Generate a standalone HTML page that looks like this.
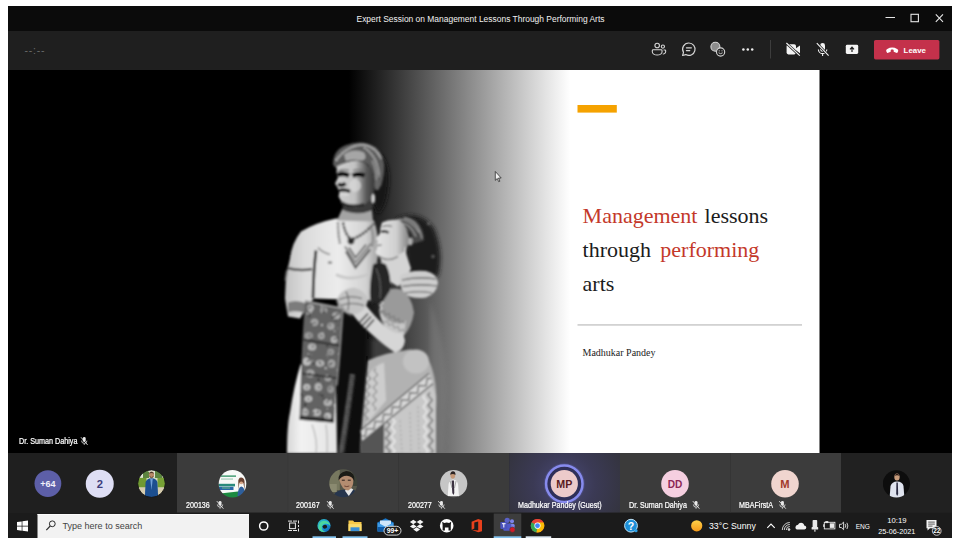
<!DOCTYPE html>
<html>
<head>
<meta charset="utf-8">
<title>Expert Session on Management Lessons Through Performing Arts</title>
<style>
*{box-sizing:border-box;margin:0;padding:0}
html,body{width:960px;height:550px;background:#fff;overflow:hidden}
body{position:relative;font-family:"Liberation Sans",sans-serif;color:#fff}
#win{position:absolute;left:8px;top:6px;width:944px;height:531.5px;background:#000;overflow:hidden}
.abs{position:absolute}
#titlebar{position:absolute;left:0;top:0;width:944px;height:25px;background:#0b0b0b}
#title{position:absolute;left:0;width:944px;top:7px;text-align:center;font-size:8.45px;line-height:12px;color:#f2f2f2;padding-left:1px}
#toolbar{position:absolute;left:0;top:25px;width:944px;height:38.5px;background:#1f1f1f}
#stage{position:absolute;left:0;top:63.5px;width:944px;height:383.5px;background:#000}
#strip{position:absolute;left:0;top:447px;width:944px;height:59.5px;background:#1f1f1f}
#taskbar{position:absolute;left:0;top:506.5px;width:944px;height:25px;background:#1b1b1b}
.tile{position:absolute;top:0;height:59.5px;background:#3b3b3b}
.av{position:absolute;border-radius:50%;overflow:hidden}
.lbl{position:absolute;font-size:8.3px;line-height:10px;color:#fff;white-space:nowrap;font-weight:400;-webkit-text-stroke:.22px #fff;transform:scaleX(.86);transform-origin:0 0}
</style>
</head>
<body>
<div id="win">
  <div id="titlebar">
    <div id="title">Expert Session on Management Lessons Through Performing Arts</div>
    <svg class="abs" style="left:870px;top:0" width="74" height="25" viewBox="0 0 74 25">
      <path d="M7.5 11.5H17" stroke="#e6e6e6" stroke-width="1" fill="none"/>
      <rect x="33" y="8.3" width="7.4" height="7.4" stroke="#e6e6e6" stroke-width="1.1" fill="none"/>
      <path d="M57.8 8.3L65 15.8M65 8.3L57.8 15.8" stroke="#e6e6e6" stroke-width="1.1" fill="none"/>
    </svg>
  </div>
  <div id="toolbar">
    <div class="abs" style="left:16.6px;top:13.9px;font-size:10.5px;line-height:11px;color:#6a6a6a;letter-spacing:.75px">--:--</div>
    <svg class="abs" style="left:0;top:0" width="944" height="38.5" viewBox="8 31 944 38.5">
      <!-- people -->
      <g stroke="#d6d6d6" stroke-width="1.3" fill="none" stroke-linejoin="round" transform="translate(659.2 48.8) scale(.84) translate(-659.6 -49.2)">
        <circle cx="657.2" cy="45.3" r="2.7"/>
        <path d="M652.4 50.4 h9.6 a1 1 0 0 1 1 1 v1.2 a5.8 4 0 0 1 -11.6 0 v-1.2 a1 1 0 0 1 1 -1z"/>
        <circle cx="664" cy="46.6" r="1.9"/>
        <path d="M664.8 50.6 h1.6 a.9 .9 0 0 1 .9 .9 v.9 a3.2 3 0 0 1 -3.4 3"/>
      </g>
      <!-- chat -->
      <g stroke="#d6d6d6" stroke-width="1.15" fill="none" stroke-linecap="round" stroke-linejoin="round">
        <path d="M688.8 43 a6.2 6.2 0 1 1 -3 11.6 l-3.2 .9 .9 -3.1 a6.2 6.2 0 0 1 5.3 -9.4z"/>
        <path d="M686.4 47.8 h5 M686.4 50.6 h3.4"/>
      </g>
      <!-- reactions -->
      <g>
        <circle cx="715.4" cy="46.8" r="4.5" fill="#8d8d8d" stroke="#d6d6d6" stroke-width="1.1"/>
        <circle cx="720.6" cy="52" r="4.1" fill="#1f1f1f" stroke="#d6d6d6" stroke-width="1.1"/>
        <path d="M718.6 52.8 q2 1.8 4 0" stroke="#d6d6d6" stroke-width=".9" fill="none"/>
        <circle cx="719.2" cy="50.8" r=".6" fill="#d6d6d6"/><circle cx="722" cy="50.8" r=".6" fill="#d6d6d6"/>
      </g>
      <!-- more -->
      <circle cx="743.4" cy="49.5" r="1.25" fill="#ededed"/><circle cx="747.8" cy="49.5" r="1.25" fill="#ededed"/><circle cx="752.2" cy="49.5" r="1.25" fill="#ededed"/>
      <rect x="770" y="40" width="1" height="18.5" fill="#3d3d3d"/>
      <!-- camera off -->
      <g>
        <rect x="786.6" y="44.2" width="9.4" height="10.2" rx="1.8" fill="#f4f4f4"/>
        <path d="M796 48.2 L800 45.4 V53.2 L796 50.4 Z" fill="#f4f4f4"/>
        <path d="M785.8 42.6 L800.2 56" stroke="#1f1f1f" stroke-width="2.6"/>
        <path d="M786.4 43 L799.8 55.6" stroke="#f4f4f4" stroke-width="1.1"/>
      </g>
      <!-- mic off -->
      <g>
        <rect x="820.2" y="43" width="4.8" height="8.8" rx="2.4" fill="#f4f4f4"/>
        <path d="M818.4 49.4 a4.2 4.2 0 0 0 8.4 0 M822.6 53.6 v2.4" stroke="#f4f4f4" stroke-width="1.1" fill="none"/>
        <path d="M816.4 42.8 L829 56" stroke="#1f1f1f" stroke-width="2.6"/>
        <path d="M816.8 43.2 L828.6 55.6" stroke="#f4f4f4" stroke-width="1.1"/>
      </g>
      <!-- share -->
      <g>
        <rect x="845.8" y="44.8" width="12.4" height="9.2" rx="1.4" fill="#f4f4f4"/>
        <path d="M852 52 V47.6 M850 49.4 L852 47.2 L854 49.4" stroke="#1f1f1f" stroke-width="1.2" fill="none"/>
      </g>
      <!-- leave -->
      <rect x="874" y="40" width="65.4" height="19.4" rx="1.6" fill="#c4314b"/>
      <path d="M886.4 51.6 c-.5 -1 -.2 -2 .9 -2.7 c3.1 -1.9 6.7 -1.9 9.8 0 c1.1 .7 1.4 1.7 .9 2.7 l-.5 .8 c-.3 .5 -.8 .6 -1.3 .4 l-1.9 -.8 c-.5 -.2 -.7 -.6 -.7 -1.1 l.1 -1 c-1.100 -.4 -1.900 -.4 -3 0 l.1 1 c0 .5 -.2 .9 -.7 1.100 l-1.900 .8 c-.5 .2 -1 .1 -1.300 -.4z" fill="#fff"/>
      <text x="903.6" y="52.5" font-family="Liberation Sans, sans-serif" font-weight="700" font-size="7.9" fill="#fff">Leave</text>
    </svg>
  </div>
  <div id="stage">
    <svg class="abs" style="left:0;top:0" width="944" height="383.5" viewBox="8 69.5 944 383.5">
      <defs>
        <linearGradient id="bgG" gradientUnits="userSpaceOnUse" x1="349" y1="0" x2="570" y2="0">
          <stop offset="0" stop-color="#000"/><stop offset="1" stop-color="#fff"/>
        </linearGradient>
        <filter id="b1" x="-10%" y="-10%" width="120%" height="120%"><feGaussianBlur stdDeviation=".9"/></filter>
        <filter id="b2" x="-20%" y="-20%" width="140%" height="140%"><feGaussianBlur stdDeviation="2.2"/></filter>
      </defs>
      <rect x="8" y="69.5" width="811.5" height="383.5" fill="url(#bgG)"/>
      <g id="photo">
        <defs>
          <linearGradient id="faceG" gradientUnits="userSpaceOnUse" x1="336" y1="0" x2="378" y2="0">
            <stop offset="0" stop-color="#cfcfcf"/><stop offset=".45" stop-color="#c2c2c2"/><stop offset=".72" stop-color="#5a5a5a"/><stop offset="1" stop-color="#2c2c2c"/>
          </linearGradient>
          <linearGradient id="torsoG" gradientUnits="userSpaceOnUse" x1="286" y1="0" x2="380" y2="0">
            <stop offset="0" stop-color="#c4c4c4"/><stop offset=".2" stop-color="#dcdcdc"/><stop offset=".55" stop-color="#ececec"/><stop offset=".85" stop-color="#d2d2d2"/><stop offset="1" stop-color="#9a9a9a"/>
          </linearGradient>
          <linearGradient id="wfaceG" gradientUnits="userSpaceOnUse" x1="376" y1="0" x2="410" y2="0">
            <stop offset="0" stop-color="#e6e6e6"/><stop offset=".6" stop-color="#cfcfcf"/><stop offset="1" stop-color="#7c7c7c"/>
          </linearGradient>
          <linearGradient id="dhotiG" gradientUnits="userSpaceOnUse" x1="284" y1="0" x2="340" y2="0">
            <stop offset="0" stop-color="#d0d0d0"/><stop offset=".3" stop-color="#f2f2f2"/><stop offset="1" stop-color="#e2e2e2"/>
          </linearGradient>
        </defs>
        <!-- soft dark shapes -->
        <g filter="url(#b2)">
          <path d="M396 218 Q420 208 434 228 Q444 252 438 276 L404 276 Q412 250 396 218 Z" fill="#1c1c1c"/>
          <path d="M376 150 Q392 160 388 190 Q386 206 378 214 L370 196 Z" fill="#151515"/>
          <path d="M342 306 L368 316 L366 372 L360 453 L334 453 L336 420 Z" fill="#0c0c0c"/>
          
          <path d="M430 300 Q448 350 446 400 L444 453 L430 453 Z" fill="#8c8c8c" opacity=".3"/>
          <path d="M372 338 L404 342 L404 360 L372 364 Z" fill="#3c3c3c"/>
        </g>
        <g filter="url(#b1)">
          <!-- white dhoti -->
          <path d="M300.5 364 L336 370 L337 453 L287 453 Q287 425 290 412 Q294 385 300.5 364 Z" fill="url(#dhotiG)"/>
          <path d="M312 424 Q318 440 316 453 M326 424 Q328 440 327 453" stroke="#bdbdbd" stroke-width="1.4" fill="none"/>
          <!-- man body -->
          <path d="M336 218 Q316 222 301 231 Q292 242 290 258 L286 276 L285 298 L288 316 L300 318 L308 304 L314 298 L376 300 L377 262 Q381 240 374 220 Z" fill="url(#torsoG)"/>
          <!-- arm/torso gap -->
          <path d="M316 250 Q313.500 270 313 298" stroke="#2e2e2e" stroke-width="2.800" fill="none"/>
          <path d="M318 247 Q322 252 330 254" stroke="#8e8e8e" stroke-width="1.6" fill="none"/>
          <!-- armband -->
          <path d="M287 267.5 Q300 271 312 268.5" stroke="#4e4e4e" stroke-width="2.6" fill="none"/>
          <path d="M287 270 L285.5 280" stroke="#777" stroke-width="2" fill="none"/>
          <!-- wrist bracelet -->
          <path d="M288 302 Q298 298 308 304 L306 313 Q296 309 288 312 Z" fill="#7c7c7c"/>
          <!-- nipple -->
          <ellipse cx="330" cy="262" rx="2.2" ry="1.6" fill="#8a8a8a"/>
          <!-- chest shading -->
          <path d="M336 274 Q352 282 372 272" stroke="#c8c8c8" stroke-width="3" fill="none"/>
          <!-- neck -->
          <path d="M344 199 L342 210 Q356 216 372 211 L375 194 Z" fill="#3a3a3a"/>
          <path d="M342 209 Q356 216 372 210 L373 221 L337 220 Z" fill="#a4a4a4"/>
          <!-- necklaces -->
          <path d="M338 222 Q338 234 340 243" stroke="#7a7a7a" stroke-width="2.6" fill="none" stroke-dasharray="2.2 1"/>
          <path d="M343 222 Q345 234 351 239 Q362 236 374 223" stroke="#444" stroke-width="2.6" fill="none" stroke-dasharray="2.6 .9"/>
          <circle cx="351" cy="240.5" r="3.4" fill="#2e2e2e"/>
          <path d="M345 246 L355.5 262 L371 243" stroke="#8a8a8a" stroke-width="2.2" fill="none"/>
          <path d="M346 251 L355.5 267 L370 249" stroke="#5c5c5c" stroke-width="2.2" fill="none"/>
          <path d="M349 247 L355.5 257 L366 244" stroke="#6a6a6a" stroke-width="1.8" fill="none"/>
          <path d="M371 226 Q374 236 372 246" stroke="#777" stroke-width="2.2" fill="none" stroke-dasharray="2 1"/>
          <!-- turban -->
          <path d="M333 164 Q333 150 345 145 Q362 138 376 147 Q386 156 384 172 Q383 180 381 186 L374 186 Q376 172 368 164 Q356 158 346 161 Q339 163 336 168 Z" fill="#5c5c5c"/>
          <path d="M344 154 Q354 147 364 152 Q368 158 362 160 Q352 158 346 161 Z" fill="#a6a6a6"/>
          <path d="M336 160 Q346 146 362 144 Q376 146 381 158" stroke="#c8c8c8" stroke-width="2.2" fill="none" stroke-dasharray="1.8 1.1"/>
          <path d="M364 147 Q378 156 379 176" stroke="#bcbcbc" stroke-width="2" fill="none" stroke-dasharray="1.8 1.2"/>
          <path d="M372 160 Q378 170 376 184" stroke="#8c8c8c" stroke-width="2" fill="none"/>
          <!-- face -->
          <path d="M337 166 Q345 160.500 357 160 Q368 162 373 171 Q376.500 183 373.500 194 Q369 203 359 206.500 Q348 208 342 202 L338.500 196 L339.500 191.500 L337.500 187 L335 183 L338 177 L336.500 172 Z" fill="url(#faceG)"/>
          <path d="M337.500 174.600 Q343 172 349 175.200 M352.500 175.200 Q358 172.400 364.500 175.200" stroke="#050505" stroke-width="4.600" fill="none"/>
          <path d="M338 170.500 Q344 168 349 170 M353 170 Q359 168 365 171" stroke="#6a6a6a" stroke-width="1.200" fill="none"/>
          <path d="M338 183.600 q3.500 2.400 7.500 -.8" stroke="#050505" stroke-width="3.600" fill="none"/>
          <path d="M338.500 190.200 Q343.500 188.300 350 191" stroke="#0a0a0a" stroke-width="3.200" fill="none"/>
          <path d="M340 193.500 Q345 195 349 193.500" stroke="#e0e0e0" stroke-width="1.400" fill="none"/>
          <ellipse cx="355" cy="185" rx="6" ry="6.500" fill="#dadada" opacity=".7"/>
          <path d="M341.500 202 Q350 208 364 204" stroke="#2a2a2a" stroke-width="3" fill="none"/>
          <ellipse cx="377.200" cy="184.500" rx="2.600" ry="5.200" fill="#666"/>
          <ellipse cx="373.300" cy="198" rx="1.800" ry="4.600" fill="#d2d2d2"/>
          <!-- woman headband -->
          <path d="M395 219 Q406 214 416 220 Q424 228 424 240 L414 243 Q412 230 402 226 Z" fill="#4a4a4a"/>
          <path d="M397 219.500 Q410 217 419 232 M400 223 Q410 222 416 236 M404 217 Q418 220 422 238" stroke="#9a9a9a" stroke-width="1.300" fill="none"/>
          <circle cx="428.600" cy="223" r="1.600" fill="#6a6a6a"/><circle cx="433" cy="256" r="1.800" fill="#5a5a5a"/>
          <!-- woman face (tilted up) -->
          <path d="M382 222 Q390 218 400 220 Q409 228 410 242 Q404 254 392 258 Q384 259 378 255 L375.500 252 L377.500 247 L376.500 244 L378 241 L376 238 L380 233 Q380 227 382 222 Z" fill="url(#wfaceG)"/>
          <path d="M381 231.500 Q384.500 229.600 388.500 232.200" stroke="#111" stroke-width="2.400" fill="none"/>
          <path d="M382 226.500 Q387 224 392 226" stroke="#666" stroke-width="1.100" fill="none"/>
          <path d="M377 244.500 q2.500 .8 4.500 -.3" stroke="#555" stroke-width="1.200" fill="none"/>
          <ellipse cx="410.500" cy="241" rx="2.300" ry="4" fill="#b0b0b0"/>
          <path d="M405.500 247 L405 256" stroke="#e4e4e4" stroke-width="1.400"/>
          <!-- woman neck -->
          <path d="M380 256 Q392 260 405 250 L411 268 Q406 280 398 286 L388 280 Q383 270 380 256 Z" fill="#d4d4d4"/>
          <path d="M379 256 Q388 262 398 256" stroke="#8a8a8a" stroke-width="1.600" fill="none"/>
          <!-- man's hand on shoulder -->
          <path d="M400 275 Q410 269 426 270.500 Q437 273 438 282 Q437 293 426 297 Q412 299 404 293 Q399 286 400 275 Z" fill="#cdcdcd"/>
          <path d="M402 279.500 Q418 276 436 278.500 M402 286 Q418 283 437 285.500 M405 292.500 Q420 290 432 292.500" stroke="#4c4c4c" stroke-width="1.200" fill="none"/>
          <!-- dress -->
          <path d="M368 360 Q386 352 404 350 Q420 346 429 360 Q438 380 436 410 L436 453 L360 453 L361 434 Q364 400 366 380 Z" fill="#b2b2b2"/>
          <ellipse cx="416" cy="361" rx="13" ry="12" fill="#c2c2c2"/>
          <path d="M366 378 Q372 366 384 362 L386 400 L366 424 Z" fill="#cdcdcd"/>
          <path d="M369.0 372.0 L366.7 373.9 L370.8 378.1 L366.2 381.9 L370.3 386.1 L365.7 389.9 L369.8 394.1 L365.2 397.9 L369.3 402.1 L364.7 405.9 L368.8 410.1 L364.2 413.9 L368.3 418.1 L366.0 420.0" stroke="#7a7a7a" stroke-width="1.2" fill="none" stroke-linejoin="round"/>
          <path d="M376.0 368.0 L373.9 370.0 L377.7 374.4 L373.5 378.4 L377.3 382.8 L373.1 386.8 L376.9 391.2 L372.7 395.2 L376.5 399.6 L372.3 403.6 L376.1 408.0 L374.0 410.0" stroke="#8a8a8a" stroke-width="1.1" fill="none" stroke-linejoin="round"/>
          <!-- lower skirt -->
          <path d="M386 412 L432 384 L436 396 L436 453 L384 453 Z" fill="#c8c8c8"/>
          <path d="M388.0 418.0 L385.6 420.2 L390.4 424.6 L385.6 428.9 L390.4 433.3 L385.6 437.7 L390.4 442.1 L385.6 446.4 L390.4 450.8 L388.0 453.0" stroke="#6c6c6c" stroke-width="1.4" fill="none" stroke-linejoin="round"/>
          <path d="M393.0 414.0 L390.8 416.4 L395.2 421.3 L390.8 426.2 L395.2 431.1 L390.8 435.9 L395.2 440.8 L390.8 445.7 L395.2 450.6 L393.0 453.0" stroke="#f0f0f0" stroke-width="1.3" fill="none" stroke-linejoin="round"/>
          <path d="M430.0 392.0 L427.8 394.6 L432.3 399.6 L428.0 404.7 L432.5 409.8 L428.2 414.9 L432.7 419.9 L428.3 425.1 L432.8 430.1 L428.5 435.2 L433.0 440.3 L428.7 445.4 L433.2 450.4 L431.0 453.0" stroke="#6c6c6c" stroke-width="1.4" fill="none" stroke-linejoin="round"/>
          <path d="M425.0 394.0 L423.0 396.5 L427.1 401.3 L423.2 406.3 L427.3 411.2 L423.4 416.2 L427.5 421.0 L423.5 426.0 L427.6 430.8 L423.7 435.8 L427.8 440.7 L423.9 445.7 L428.0 450.5 L426.0 453.0" stroke="#f0f0f0" stroke-width="1.2" fill="none" stroke-linejoin="round"/>
          <path d="M400 420 L402 453 M410 412 L411 453 M418 406 L419 453" stroke="#a4a4a4" stroke-width="1.2" stroke-dasharray="2 2.5" fill="none"/>
          <!-- dark corner -->
          <path d="M361 438 L384 422 L384 453 L360 453 Z" fill="#555"/>
          <!-- diagonal band -->
          <path d="M360.5 430 L429 373 L433 383 L362 441 Z" fill="#d8d8d8"/>
          <path d="M360.5 430 L429 373" stroke="#5a5a5a" stroke-width="1.4"/>
          <path d="M362 441 L433 383" stroke="#5a5a5a" stroke-width="1.4"/>
          <path d="M361.5 435.5 L365.3 435.7 L366.4 428.1 L374.0 428.5 L375.0 420.9 L382.7 421.3 L383.7 413.7 L391.4 414.1 L392.4 406.5 L400.1 407.0 L401.1 399.4 L408.8 399.8 L409.8 392.2 L417.5 392.6 L418.5 385.0 L426.1 385.4 L427.2 377.8 L431.0 378.0" stroke="#6a6a6a" stroke-width="1.4" fill="none" stroke-linejoin="round"/>
          <!-- blouse -->
          <path d="M384 291 Q392 286 401 289 Q412 296 414 312 Q412 326 404 335 L388 331 Q381 322 379 310 Z" fill="#9a9a9a"/>
          <path d="M379 309 Q384 318 392 322 Q400 324 406 320 L404 335 L388 331 Q381 322 379 309 Z" fill="#c6c6c6"/>
          <path d="M380.0 310.0 L380.3 312.2 L384.5 310.4 L385.1 314.8 L389.3 313.0 L389.9 317.4 L394.1 315.6 L394.7 320.0 L398.9 318.2 L399.5 322.6 L403.7 320.8 L404.0 323.0" stroke="#7a7a7a" stroke-width="1.1" fill="none" stroke-linejoin="round"/>
          <path d="M383.0 320.0 L383.6 322.1 L387.7 320.6 L388.8 324.9 L392.9 323.4 L394.1 327.6 L398.2 326.1 L399.3 330.4 L403.4 328.9 L404.0 331.0" stroke="#8a8a8a" stroke-width="1.0" fill="none" stroke-linejoin="round"/>
          <path d="M384.0 292.0 L382.1 293.1 L384.6 296.6 L380.8 298.7 L383.2 302.3 L379.4 304.4 L381.9 307.9 L380.0 309.0" stroke="#d6d6d6" stroke-width="1.1" fill="none" stroke-linejoin="round"/>
          <!-- dark drape -->
          <path d="M373 264 Q380 260 386 264 Q392 276 390 290 L383 301 L371 303 Q368 290 373 264 Z" fill="#262626"/>
          <path d="M376 268 Q382 280 380 298" stroke="#5a5a5a" stroke-width="1.300" fill="none"/>
          <!-- woman arm -->
          <path d="M352 313 Q360 324 372 334 Q384 345 395 352 Q404 350 405 340 L403 333 Q392 333 384 325 Q374 315 366 305 Z" fill="#d6d6d6"/>
          <path d="M359.5 322 l8.5 -9 M362.5 325 l8.5 -9 M365.5 328.5 l8.5 -9.5" stroke="#262626" stroke-width="1.6" fill="none"/>
          <path d="M361 323.5 l8.5 -9 M364 326.8 l8.5 -9.2" stroke="#d8d8d8" stroke-width="1" fill="none"/>
          <!-- clasped hands -->
          <path d="M337 298 Q342 288 354 287 Q366 290 368 300 Q366 310 356 314 Q344 314 338 306 Z" fill="#c4c4c4"/>
          <path d="M339 299 Q350 294 362 298 M341 305 Q352 301 364 305 M346 291 Q350 298 348 310" stroke="#5a5a5a" stroke-width="1.1" fill="none"/>
          <path d="M337 300 Q342 310 352 315" stroke="#8a8a8a" stroke-width="2.6" stroke-dasharray="1.6 1" fill="none"/>
          <!-- dupatta border -->
          <path d="M352 374 Q347 412 340.5 453" stroke="#868686" stroke-width="4.5" stroke-dasharray="1.6 1.2" fill="none"/>
          <path d="M355 374 Q350 412 344 453" stroke="#3a3a3a" stroke-width="1.2" fill="none"/>
          <!-- brocade -->
          <path d="M305 300.5 L343 308 L340 350 L336 390 L334 420.5 L299.5 417.5 L301 370 L303 330 Z" fill="#626262"/>
          <ellipse cx="310.5" cy="307.5" rx="3.3" ry="3.5" fill="#b4b4b4"/>
          <circle cx="310.2" cy="306.7" r="1" fill="#555"/>
          <ellipse cx="323.7" cy="309.7" rx="3.7" ry="3.2" fill="#9a9a9a"/>
          <circle cx="323.8" cy="308.8" r="1" fill="#555"/>
          <ellipse cx="336.2" cy="315.2" rx="3.9" ry="3.4" fill="#b4b4b4"/>
          <circle cx="337.2" cy="314.3" r="1" fill="#555"/>
          <ellipse cx="314.5" cy="321.8" rx="3.8" ry="3.6" fill="#a6a6a6"/>
          <circle cx="314.6" cy="322.2" r="1" fill="#555"/>
          <ellipse cx="330.9" cy="325.7" rx="3.6" ry="3.5" fill="#a6a6a6"/>
          <circle cx="330.0" cy="324.8" r="1" fill="#555"/>
          <ellipse cx="308.7" cy="335.2" rx="4.1" ry="3.5" fill="#9a9a9a"/>
          <circle cx="309.6" cy="334.9" r="1" fill="#555"/>
          <ellipse cx="321.3" cy="335.5" rx="3.3" ry="3.3" fill="#a6a6a6"/>
          <circle cx="321.3" cy="335.2" r="1" fill="#555"/>
          <ellipse cx="334.1" cy="339.2" rx="3.3" ry="3.4" fill="#b4b4b4"/>
          <circle cx="334.6" cy="338.5" r="1" fill="#555"/>
          <ellipse cx="312.0" cy="346.5" rx="4.1" ry="3.6" fill="#b4b4b4"/>
          <circle cx="312.8" cy="346.1" r="1" fill="#555"/>
          <ellipse cx="330.8" cy="351.4" rx="3.3" ry="3.1" fill="#9a9a9a"/>
          <circle cx="330.4" cy="351.7" r="1" fill="#555"/>
          <ellipse cx="307.0" cy="361.1" rx="4.0" ry="4.0" fill="#c0c0c0"/>
          <circle cx="307.6" cy="360.7" r="1" fill="#555"/>
          <ellipse cx="320.0" cy="362.8" rx="4.3" ry="3.4" fill="#b4b4b4"/>
          <circle cx="320.2" cy="362.8" r="1" fill="#555"/>
          <ellipse cx="331.6" cy="363.2" rx="3.7" ry="3.9" fill="#a6a6a6"/>
          <circle cx="331.6" cy="362.5" r="1" fill="#555"/>
          <ellipse cx="310.3" cy="373.0" rx="4.2" ry="3.9" fill="#a6a6a6"/>
          <circle cx="309.9" cy="372.9" r="1" fill="#555"/>
          <ellipse cx="328.0" cy="377.5" rx="3.4" ry="3.2" fill="#a6a6a6"/>
          <circle cx="327.5" cy="376.9" r="1" fill="#555"/>
          <ellipse cx="306.8" cy="386.7" rx="3.5" ry="3.1" fill="#c0c0c0"/>
          <circle cx="306.9" cy="386.9" r="1" fill="#555"/>
          <ellipse cx="318.3" cy="386.4" rx="3.7" ry="3.9" fill="#b4b4b4"/>
          <circle cx="319.2" cy="386.8" r="1" fill="#555"/>
          <ellipse cx="330.7" cy="388.8" rx="3.3" ry="3.6" fill="#9a9a9a"/>
          <circle cx="329.9" cy="388.0" r="1" fill="#555"/>
          <ellipse cx="308.4" cy="398.3" rx="3.9" ry="3.1" fill="#c0c0c0"/>
          <circle cx="308.5" cy="398.4" r="1" fill="#555"/>
          <ellipse cx="327.9" cy="402.0" rx="4.2" ry="3.6" fill="#b4b4b4"/>
          <circle cx="327.2" cy="401.5" r="1" fill="#555"/>
          <ellipse cx="305.2" cy="411.7" rx="3.3" ry="3.5" fill="#b4b4b4"/>
          <circle cx="306.1" cy="411.6" r="1" fill="#555"/>
          <ellipse cx="316.7" cy="412.0" rx="4.1" ry="3.5" fill="#c0c0c0"/>
          <circle cx="317.1" cy="412.0" r="1" fill="#555"/>
          <ellipse cx="327.7" cy="415.8" rx="3.4" ry="3.5" fill="#c0c0c0"/>
          <circle cx="326.8" cy="415.9" r="1" fill="#555"/>
          <circle cx="334.5" cy="405.0" r="1.0" fill="#c4c4c4"/>
          <circle cx="318.1" cy="408.5" r="0.8" fill="#2a2a2a"/>
          <circle cx="319.5" cy="393.8" r="0.8" fill="#2a2a2a"/>
          <circle cx="322.3" cy="395.2" r="1.1" fill="#2a2a2a"/>
          <circle cx="328.8" cy="399.3" r="1.0" fill="#2a2a2a"/>
          <circle cx="309.5" cy="359.2" r="1.0" fill="#1c1c1c"/>
          <circle cx="331.1" cy="360.0" r="0.7" fill="#c4c4c4"/>
          <circle cx="315.4" cy="411.6" r="1.2" fill="#c4c4c4"/>
          <circle cx="307.5" cy="313.0" r="0.9" fill="#c4c4c4"/>
          <circle cx="308.9" cy="374.5" r="1.1" fill="#1c1c1c"/>
          <circle cx="318.5" cy="379.1" r="1.1" fill="#1c1c1c"/>
          <circle cx="335.7" cy="320.3" r="0.8" fill="#2a2a2a"/>
          <circle cx="321.9" cy="324.6" r="1.1" fill="#c4c4c4"/>
          <circle cx="302.8" cy="411.5" r="1.0" fill="#777"/>
          <circle cx="313.7" cy="412.6" r="1.0" fill="#2a2a2a"/>
          <circle cx="342.5" cy="311.0" r="1.0" fill="#777"/>
          <circle cx="334.4" cy="323.1" r="1.1" fill="#777"/>
          <circle cx="327.2" cy="345.4" r="0.9" fill="#2a2a2a"/>
          <circle cx="301.4" cy="394.1" r="1.0" fill="#1c1c1c"/>
          <circle cx="318.2" cy="411.5" r="0.9" fill="#2a2a2a"/>
          <circle cx="334.6" cy="330.6" r="0.8" fill="#c4c4c4"/>
          <circle cx="318.5" cy="391.9" r="0.8" fill="#777"/>
          <circle cx="336.2" cy="313.7" r="1.0" fill="#777"/>
          <circle cx="323.8" cy="398.4" r="0.9" fill="#2a2a2a"/>
          <circle cx="321.4" cy="364.5" r="0.6" fill="#777"/>
          <circle cx="329.5" cy="375.4" r="1.1" fill="#2a2a2a"/>
          <circle cx="308.7" cy="356.8" r="1.0" fill="#1c1c1c"/>
          <circle cx="313.9" cy="362.8" r="0.9" fill="#1c1c1c"/>
          <circle cx="338.1" cy="313.5" r="0.7" fill="#1c1c1c"/>
          <circle cx="330.2" cy="363.9" r="0.9" fill="#1c1c1c"/>
          <circle cx="317.5" cy="374.3" r="0.9" fill="#2a2a2a"/>
          <circle cx="327.7" cy="357.2" r="0.9" fill="#777"/>
          <circle cx="322.5" cy="332.7" r="0.9" fill="#c4c4c4"/>
          <circle cx="332.3" cy="408.2" r="0.7" fill="#777"/>
          <circle cx="309.5" cy="315.7" r="0.9" fill="#1c1c1c"/>
          <circle cx="327.1" cy="354.4" r="0.7" fill="#c4c4c4"/>
          <circle cx="327.4" cy="408.2" r="0.7" fill="#c4c4c4"/>
          <circle cx="305.1" cy="404.3" r="1.2" fill="#2a2a2a"/>
          <circle cx="332.6" cy="316.8" r="1.1" fill="#2a2a2a"/>
          <circle cx="335.2" cy="401.6" r="0.7" fill="#777"/>
          <circle cx="339.1" cy="353.4" r="0.9" fill="#c4c4c4"/>
          <circle cx="312.3" cy="386.3" r="0.6" fill="#777"/>
          <circle cx="321.6" cy="305.9" r="0.8" fill="#c4c4c4"/>
          <circle cx="324.0" cy="311.7" r="1.2" fill="#2a2a2a"/>
          <circle cx="341.0" cy="319.6" r="0.8" fill="#1c1c1c"/>
          <circle cx="337.8" cy="327.8" r="1.1" fill="#777"/>
          <circle cx="331.6" cy="383.4" r="1.2" fill="#777"/>
          <circle cx="305.1" cy="408.5" r="0.9" fill="#c4c4c4"/>
          <circle cx="308.1" cy="307.9" r="1.0" fill="#777"/>
          <circle cx="336.7" cy="337.6" r="0.6" fill="#1c1c1c"/>
          <circle cx="334.8" cy="316.0" r="1.1" fill="#1c1c1c"/>
          <circle cx="314.3" cy="316.6" r="0.6" fill="#777"/>
          <circle cx="337.9" cy="337.7" r="0.7" fill="#2a2a2a"/>
          <circle cx="332.1" cy="416.8" r="0.8" fill="#2a2a2a"/>
          <circle cx="310.7" cy="338.2" r="0.8" fill="#2a2a2a"/>
          <circle cx="312.8" cy="360.5" r="0.7" fill="#c4c4c4"/>
          <circle cx="327.3" cy="419.3" r="0.6" fill="#1c1c1c"/>
          <circle cx="328.4" cy="368.7" r="0.7" fill="#777"/>
          <circle cx="311.5" cy="354.2" r="1.0" fill="#777"/>
          <circle cx="325.7" cy="367.7" r="1.1" fill="#c4c4c4"/>
          <circle cx="323.4" cy="417.6" r="0.8" fill="#2a2a2a"/>
          <circle cx="318.0" cy="343.6" r="0.6" fill="#2a2a2a"/>
          <circle cx="302.1" cy="373.7" r="1.1" fill="#777"/>
          <circle cx="310.7" cy="311.5" r="1.1" fill="#c4c4c4"/>
          <circle cx="322.5" cy="384.2" r="0.6" fill="#2a2a2a"/>
          <circle cx="308.3" cy="353.5" r="0.8" fill="#c4c4c4"/>
          <circle cx="337.1" cy="369.4" r="0.7" fill="#c4c4c4"/>
          <circle cx="312.1" cy="323.4" r="0.8" fill="#1c1c1c"/>
          <circle cx="319.4" cy="361.8" r="0.7" fill="#1c1c1c"/>
          <circle cx="303.7" cy="396.4" r="0.7" fill="#1c1c1c"/>
          <path d="M303.2 339.1 L340.0 345.1" stroke="#262626" stroke-width="1.6"/>
          <path d="M301.6 373.0 L337.4 377.8" stroke="#262626" stroke-width="1.6"/>
          <path d="M305 300.5 L343 308" stroke="#9c9c9c" stroke-width="2.2"/>
          <path d="M299.5 417.5 L334 420.5" stroke="#1e1e1e" stroke-width="3.4"/>
          <path d="M343 308 L340 350 L337 385" stroke="#8a8a8a" stroke-width="1.6" fill="none"/>
        </g>
      </g>
      <rect x="577.5" y="104.5" width="39.3" height="7.6" fill="#f5a200"/>
      <rect x="577.5" y="324" width="224.5" height="0.9" fill="#a6a6a6"/>
    </svg>
    <div class="abs" id="slideTitle" style="left:574.6px;top:129.7px;font-family:'Liberation Serif',serif;font-size:22px;line-height:33.7px;color:#1c1c1c;white-space:nowrap"><span style="word-spacing:1.6px"><span style="color:#c4382a">Management</span> lessons</span><br><span style="word-spacing:3.8px">through <span style="color:#c4382a">performing</span></span><br>arts</div>
    <div class="abs" style="left:574.5px;top:276px;font-family:'Liberation Serif',serif;font-size:10px;line-height:14px;color:#222;white-space:nowrap">Madhukar Pandey</div>
  <div class="lbl" style="left:10.8px;top:366.3px;font-size:8.4px">Dr. Suman Dahiya</div>
    <svg class="abs" style="left:0;top:0" width="944" height="383.5" viewBox="8 69.5 944 383.5">
      <g transform="translate(80.4,436.6)"><rect x="2.4" y="0" width="2.9" height="4.8" rx="1.45" fill="#e8e8e8"/><path d="M1.2 3.6 a2.65 2.65 0 0 0 5.3 0 M3.85 6.3 v1.5" stroke="#e8e8e8" stroke-width=".8" fill="none"/><path d="M.6 .2 L7.2 7.8" stroke="#e8e8e8" stroke-width=".9"/></g>
      <path d="M495.300 171 V179.800 L497.300 178 L498.700 181.200 L499.900 180.700 L498.500 177.500 H501.200 Z" fill="#f4f4f4" stroke="#1a1a1a" stroke-width=".7" stroke-linejoin="round"/>
    </svg>
  </div>
  <div id="strip">
    <svg class="abs" style="left:0;top:0" width="944" height="59.5" viewBox="8 453 944 59.5">
      <defs>
        <clipPath id="c3"><circle cx="151.5" cy="483.6" r="13.7"/></clipPath>
        <clipPath id="c4"><circle cx="232.5" cy="483.7" r="13.8"/></clipPath>
        <clipPath id="c5"><circle cx="343.3" cy="483.3" r="14"/></clipPath>
        <clipPath id="c6"><circle cx="453.7" cy="483.7" r="13.6"/></clipPath>
        <clipPath id="c7"><circle cx="896.4" cy="483.8" r="13.6"/></clipPath>
        <radialGradient id="mpG" gradientUnits="userSpaceOnUse" cx="564.3" cy="483.7" r="62">
          <stop offset="0" stop-color="#4a4a78"/><stop offset=".5" stop-color="#3b3a55"/><stop offset="1" stop-color="#34343f"/>
        </radialGradient>
        <filter id="sb" x="-20%" y="-20%" width="140%" height="140%"><feGaussianBlur stdDeviation=".7"/></filter>
      </defs>
      <rect x="177" y="453" width="111" height="59.5" fill="#3b3b3b"/>
      <rect x="288" y="453" width="110.6" height="59.5" fill="#3c3c3c"/>
      <rect x="398.6" y="453" width="110.6" height="59.5" fill="#3b3b3b"/>
      <rect x="509.2" y="453" width="110.8" height="59.5" fill="url(#mpG)"/>
      <rect x="620" y="453" width="110.5" height="59.5" fill="#3b3b3b"/>
      <rect x="730.5" y="453" width="110.7" height="59.5" fill="#3c3c3c"/>
      <rect x="841.2" y="453" width="110.8" height="59.5" fill="#212121"/>
      <rect x="287.6" y="453" width=".8" height="59.5" fill="#373737"/>
      <rect x="398.2" y="453" width=".8" height="59.5" fill="#373737"/>
      <rect x="730.1" y="453" width=".8" height="59.5" fill="#373737"/>
      <!-- +64 -->
      <circle cx="47.9" cy="483.6" r="13.4" fill="#5d5fa8"/>
      <text x="47.9" y="486.5" text-anchor="middle" font-family="Liberation Sans, sans-serif" font-weight="700" font-size="9" fill="#f0f0fa">+64</text>
      <!-- 2 -->
      <circle cx="99.75" cy="483.75" r="14" fill="#dedef4"/>
      <text x="99.75" y="487.7" text-anchor="middle" font-family="Liberation Sans, sans-serif" font-weight="700" font-size="11.2" fill="#3c3d7c">2</text>
      <!-- avatar 3: man in blue suit, green bg -->
      <g clip-path="url(#c3)"><g filter="url(#sb)">
        <rect x="137" y="469" width="30" height="30" fill="#cfd8bc"/>
        <rect x="137" y="469" width="30" height="8" fill="#dfe6d4"/>
        <rect x="137" y="478" width="9.500" height="9.500" fill="#6f9a30"/>
        <rect x="157.500" y="477.500" width="9.500" height="10" fill="#76a034"/>
        <rect x="137" y="487.500" width="30" height="12" fill="#d6ccae"/>
        <path d="M143 472 q3 -3 6 0 v6 h-6z" fill="#5c8440"/><path d="M155 471 q4 -3 7 1 v6 h-7z" fill="#5c8440"/>
        <path d="M144.800 498 L145.600 482 Q147 478.200 151.500 478.200 Q156.200 478.200 157.400 482 L158.200 498 Z" fill="#1c4f90"/>
        <path d="M150.200 478.600 L151.500 490 L152.800 478.600 Z" fill="#6fa0d8"/>
        <ellipse cx="151.500" cy="474.600" rx="2.600" ry="3.200" fill="#b98a68"/>
        <path d="M148.900 473.600 Q151.500 469.800 154.100 473.600 Q151.500 472.200 148.900 473.600Z" fill="#4a3426"/>
        <path d="M149.600 476.500 Q151.500 479 153.400 476.500" stroke="#5a3c2a" stroke-width="1" fill="none"/>
      </g></g>
      <circle cx="151.500" cy="483.600" r="13.800" fill="none" stroke="#151515" stroke-width=".9"/>
      <!-- avatar 4: white banner w/ woman -->
      <g clip-path="url(#c4)"><g filter="url(#sb)">
        <rect x="218" y="469" width="30" height="30" fill="#f8f9f8"/>
        <rect x="221" y="475.300" width="15" height="1.700" fill="#5aa884"/>
        <rect x="221" y="478.500" width="12" height="1.100" fill="#9cc8b4"/>
        <rect x="218.500" y="483.800" width="16.500" height="2.600" fill="#2a8a7c"/>
        <rect x="218.500" y="486.800" width="15" height="3.200" fill="#2a66a8"/>
        <rect x="222" y="487.400" width="8" height="1.200" fill="#5ab088"/>
        <path d="M220 493.500 L238 491.500 L242 499 H222 Z" fill="#1f8a40"/>
        <ellipse cx="241.300" cy="481.600" rx="2.200" ry="2.700" fill="#d9a98a"/>
        <path d="M238.300 483 Q237.800 477.500 241.300 477.500 Q245 477.500 244.600 484 L244.600 490 L243.400 483 Q241.300 480.200 239.300 483 L238.600 490Z" fill="#6a4230"/>
        <path d="M237.500 496 Q238 487 241.300 486.500 Q245 487 245.500 496 Z" fill="#2f5f9c"/>
      </g></g>
      <!-- avatar 5: man -->
      <g clip-path="url(#c5)"><g filter="url(#sb)" transform="translate(.8 0)">
        <rect x="328" y="469" width="31" height="30" fill="#55564a"/>
        <rect x="328" y="470" width="11" height="20" fill="#77785e"/>
        <rect x="328" y="484" width="8" height="8" fill="#8a8a70"/>
        <rect x="352" y="470" width="7" height="16" fill="#3c4238"/>
        <path d="M331 499 Q333 491.500 340 490 L351 489 Q357 490.500 358 499 Z" fill="#26344e"/>
        <path d="M344 490.500 L348 496 L352.500 489.500 L350 488Z" fill="#e6e6e6"/>
        <path d="M338.500 480 Q338.500 473.500 345.500 473 Q352.500 473.500 352.600 481 Q352.500 487.500 347.500 490.500 Q341 490 338.500 480Z" fill="#b48c70"/>
        <path d="M337.800 480.500 Q336.800 472.500 345.500 471 Q354.500 471.500 353.600 481.500 Q351.500 476 346 475.800 Q340.500 476 337.800 480.500Z" fill="#1e1a18"/>
        <path d="M341 480.200 h3 M347 480.200 h3" stroke="#2a201a" stroke-width="1"/>
        <path d="M343.500 486 q2.500 1.200 5 0" stroke="#6a4030" stroke-width=".9" fill="none"/>
      </g></g>
      <!-- avatar 6: white coat -->
      <g clip-path="url(#c6)"><g filter="url(#sb)">
        <rect x="439" y="469" width="30" height="30" fill="#c6c6c6"/>
        <path d="M447.500 499 L448.600 484 Q449.800 480 453 479.600 Q457.200 480 458 484 L459.200 499 Z" fill="#f3f3f3"/>
        <path d="M451.600 480.500 L452.300 493 L453.400 495 L454.300 493 L454 480.500Z" fill="#3a3040"/>
        <path d="M450.200 481 L452 488 M456 481 L454.500 488" stroke="#8a8a8a" stroke-width=".7"/>
        <ellipse cx="452.800" cy="475.600" rx="2.400" ry="3.100" fill="#c49878"/>
        <path d="M450.200 474.800 Q450.500 471.200 453 471.200 Q455.600 471.400 455.500 475 Q453 473.200 450.200 474.800Z" fill="#2a2220"/>
        <path d="M448.500 497 H458.500" stroke="#444" stroke-width="1.400"/>
      </g></g>
      <!-- MP -->
      <circle cx="564.3" cy="483.7" r="20.5" fill="#6468c8" opacity=".25" filter="url(#sb)"/><circle cx="564.3" cy="483.7" r="18.2" fill="#2f2f58" stroke="#878bee" stroke-width="2.5"/>
      <circle cx="564.3" cy="483.7" r="13.6" fill="#eccaca"/>
      <text x="556.3" y="487.9" font-family="Liberation Sans, sans-serif" font-weight="700" font-size="11.2" fill="#5a1a20" textLength="16" lengthAdjust="spacingAndGlyphs">MP</text>
      <!-- DD -->
      <circle cx="675" cy="483.7" r="13.8" fill="#f5cfe0"/>
      <text x="667.7" y="487.9" font-family="Liberation Sans, sans-serif" font-weight="700" font-size="11.2" fill="#8c2656" textLength="14.6" lengthAdjust="spacingAndGlyphs">DD</text>
      <!-- M -->
      <circle cx="785" cy="483.7" r="13.8" fill="#f0d5cf"/>
      <text x="780.3" y="487.9" font-family="Liberation Sans, sans-serif" font-weight="700" font-size="11.2" fill="#a23a2c" textLength="9.3" lengthAdjust="spacingAndGlyphs">M</text>
      <!-- last avatar -->
      <g clip-path="url(#c7)"><g filter="url(#sb)">
        <rect x="883" y="469" width="28" height="30" fill="#0c0c0e"/>
        <path d="M889.500 499 L890.500 486 Q892 481.500 897 481.500 Q902.500 481.500 903.500 486 L904.500 499 Z" fill="#dfe3ee"/>
        <path d="M896.400 482.500 L896.200 494 L897.200 496 L898.200 494 L897.800 482.500Z" fill="#2a2a40"/>
        <ellipse cx="897" cy="477" rx="2.700" ry="3.500" fill="#c89c7c"/>
        <path d="M894.300 476 Q897 471.500 899.800 476 Q897 474.300 894.300 476Z" fill="#2a1c18"/>
      </g></g>
      <g transform="translate(216.2,500.9)"><rect x="2.4" y="0" width="2.9" height="4.8" rx="1.45" fill="#e8e8e8"/><path d="M1.2 3.6 a2.65 2.65 0 0 0 5.3 0 M3.85 6.3 v1.5" stroke="#e8e8e8" stroke-width=".8" fill="none"/><path d="M.6 .2 L7.2 7.8" stroke="#e8e8e8" stroke-width=".9"/></g><g transform="translate(326.4,500.9)"><rect x="2.4" y="0" width="2.9" height="4.8" rx="1.45" fill="#e8e8e8"/><path d="M1.2 3.6 a2.65 2.65 0 0 0 5.3 0 M3.85 6.3 v1.5" stroke="#e8e8e8" stroke-width=".8" fill="none"/><path d="M.6 .2 L7.2 7.8" stroke="#e8e8e8" stroke-width=".9"/></g><g transform="translate(437.6,500.9)"><rect x="2.4" y="0" width="2.9" height="4.8" rx="1.45" fill="#e8e8e8"/><path d="M1.2 3.6 a2.65 2.65 0 0 0 5.3 0 M3.85 6.3 v1.5" stroke="#e8e8e8" stroke-width=".8" fill="none"/><path d="M.6 .2 L7.2 7.8" stroke="#e8e8e8" stroke-width=".9"/></g><g transform="translate(692.2,500.9)"><rect x="2.4" y="0" width="2.9" height="4.8" rx="1.45" fill="#e8e8e8"/><path d="M1.2 3.6 a2.65 2.65 0 0 0 5.3 0 M3.85 6.3 v1.5" stroke="#e8e8e8" stroke-width=".8" fill="none"/><path d="M.6 .2 L7.2 7.8" stroke="#e8e8e8" stroke-width=".9"/></g><g transform="translate(778.6,500.9)"><rect x="2.4" y="0" width="2.9" height="4.8" rx="1.45" fill="#e8e8e8"/><path d="M1.2 3.6 a2.65 2.65 0 0 0 5.3 0 M3.85 6.3 v1.5" stroke="#e8e8e8" stroke-width=".8" fill="none"/><path d="M.6 .2 L7.2 7.8" stroke="#e8e8e8" stroke-width=".9"/></g>
    </svg>
    <div class="lbl" style="left:178.2px;top:47.2px">200136</div>
    <div class="lbl" style="left:288.3px;top:47.2px">200167</div>
    <div class="lbl" style="left:399.5px;top:47.2px">200277</div>
    <div class="lbl" style="left:510px;top:47.2px">Madhukar Pandey (Guest)</div>
    <div class="lbl" style="left:620.7px;top:47.2px">Dr. Suman Dahiya</div>
    <div class="lbl" style="left:731.2px;top:47.2px">MBAFirstA</div>
  </div>
  <div id="taskbar">
    <svg class="abs" style="left:0;top:0" width="944" height="25" viewBox="8 512.5 944 25">
      <!-- start -->
      <g fill="#fff"><path d="M17 521.600 L21.700 520.900 V525.200 H17Z M22.400 520.800 L28 520 V525.200 H22.400Z M17 525.900 H21.700 V530.200 L17 529.500Z M22.400 525.900 H28 V531.100 L22.400 530.300Z"/></g>
      <!-- search -->
      <rect x="37.500" y="513.500" width="211.500" height="24" fill="#f2f2f2"/>
      <rect x="37.500" y="513.500" width="211.500" height="1" fill="#fbfbfb"/>
      <circle cx="52.300" cy="523.300" r="2.900" fill="none" stroke="#2b2b2b" stroke-width="1"/>
      <path d="M50.200 525.500 L46.300 529.600" stroke="#2b2b2b" stroke-width="1.100"/>
      <text x="62.400" y="528.400" font-family="Liberation Sans, sans-serif" font-size="9.050" fill="#444">Type here to search</text>
      <!-- cortana -->
      <circle cx="263.700" cy="525.500" r="4.100" fill="none" stroke="#fff" stroke-width="1.500"/>
      <!-- task view -->
      <g stroke="#e8e8e8" stroke-width="1" fill="none"><rect x="289.600" y="522.500" width="5.800" height="5.600"/><path d="M288 520.600 H292 M293 520.600 H297 M288 530 H292 M293 530 H297 M298.500 520 V523 M298.500 524.500 V526.500 M298.500 528 V531"/></g>
      <!-- edge -->
      <defs>
        <linearGradient id="edgeG" x1="0" y1="0" x2="1" y2="1"><stop offset="0" stop-color="#35c1b0"/><stop offset=".5" stop-color="#1b9de2"/><stop offset="1" stop-color="#0c59a4"/></linearGradient>
        <linearGradient id="sunG" x1="0" y1="0" x2="0" y2="1"><stop offset="0" stop-color="#ffd24a"/><stop offset="1" stop-color="#f59a1a"/></linearGradient>
      </defs>
      <circle cx="324" cy="525.200" r="6.600" fill="url(#edgeG)"/>
      <path d="M318.200 527.500 Q318.500 520.500 324.500 520.300 Q329.800 520.600 330.400 525.500 Q328.500 522.800 325 523.300 Q321.600 524 321.800 527.800 Q322.500 531 326 531.400 Q320 532.500 318.200 527.500Z" fill="#4ad6a0"/>
      <path d="M322.300 526.200 Q323.200 523.800 325.600 524.200 Q327.600 524.800 327.200 526.800 Q326 528.600 323.600 528 Z" fill="#1b1b1b"/>
      <rect x="312.500" y="535.800" width="23.500" height="1.700" fill="#84c4f0"/>
      <!-- explorer -->
      <path d="M348.500 520 H353 L354.300 521.400 H361.500 V530.600 H348.500Z" fill="#f7c948"/>
      <rect x="348.500" y="523.600" width="13" height="7" fill="#fbdc6e"/>
      <rect x="350.500" y="526.800" width="9" height="3.800" fill="#3a8fd6"/>
      <rect x="342.500" y="535.800" width="25" height="1.700" fill="#84c4f0"/>
      <!-- mail -->
      <path d="M377.500 522 L385.500 517.800 L393.500 522 V529 H377.500Z" fill="#1976c8"/>
      <path d="M380 520 H391 V527 H380Z" fill="#cfe6fa"/>
      <path d="M377.500 522 L385.500 526.200 L393.500 522 V531 H377.500Z" fill="#3f9be6"/>
      <rect x="377.500" y="526.500" width="8" height="4.500" fill="#0f5aa6"/>
      <rect x="384" y="525.800" width="17" height="8.800" rx="4.400" fill="#1b1b1b" stroke="#e8e8e8" stroke-width=".9"/>
      <text x="392.500" y="532.700" text-anchor="middle" font-family="Liberation Sans, sans-serif" font-weight="700" font-size="6.800" fill="#fff">99+</text>
      <!-- dropbox -->
      <g fill="#f4f4f4"><path d="M413.300 519.300 L416.700 521.500 L413.300 523.700 L409.900 521.500Z M420.100 519.300 L423.500 521.500 L420.100 523.700 L416.700 521.500Z M413.300 523.700 L416.700 525.900 L413.300 528.100 L409.900 525.900Z M420.100 523.700 L423.500 525.900 L420.100 528.100 L416.700 525.900Z M416.700 526.800 L420.100 529 L416.700 531.200 L413.300 529Z"/></g>
      <!-- github -->
      <circle cx="446.700" cy="525.200" r="6.800" fill="#fff"/>
      <path d="M442.600 530 V524.500 L442.200 521.200 L444.300 522.400 Q446.700 521.700 449.100 522.400 L451.200 521.200 L450.800 524.500 V530 H448.500 V527 H444.900 V530Z" fill="#1b1b1b"/>
      <!-- office -->
      <path d="M471.600 521.300 L478.200 518.600 L482 519.700 V530.700 L478.200 531.800 L471.600 529.200 L478.200 529.900 V521 L474.300 522 V528 L471.600 529.200Z" fill="#e8401c"/>
      <!-- teams -->
      <rect x="493.700" y="513" width="27.600" height="24.500" fill="#3d3d3d"/>
      <rect x="493.700" y="535.800" width="27.600" height="1.700" fill="#84c4f0"/>
      <circle cx="512" cy="520.700" r="2" fill="#7b83eb"/>
      <circle cx="507.200" cy="519.800" r="2.600" fill="#5b62c8"/>
      <rect x="508" y="523.200" width="6.600" height="6" rx="1.500" fill="#7b83eb"/>
      <rect x="503.300" y="523" width="8" height="7.200" rx="1.200" fill="#5059c9"/>
      <rect x="500.300" y="521.400" width="7" height="7" rx=".8" fill="#4b53bc"/>
      <path d="M502 523.200 H505.600 M503.800 523.200 V527" stroke="#fff" stroke-width="1"/>
      <circle cx="512.400" cy="529.200" r="2.700" fill="#d11a2a" stroke="#3d3d3d" stroke-width=".6"/>
      <!-- chrome -->
      <circle cx="537.500" cy="525.200" r="6.800" fill="#e94235"/>
      <path d="M537.500 525.200 L531.700 521.800 A6.800 6.800 0 0 0 536.600 531.900 Z" fill="#34a853"/>
      <path d="M537.500 525.200 L536.600 531.900 A6.800 6.800 0 0 0 543.400 521.800 L537.500 521.800Z" fill="#fbbc05"/>
      <path d="M531.700 521.800 A6.800 6.800 0 0 1 543.400 521.800 L537.500 521.800Z" fill="#e94235"/>
      <circle cx="537.500" cy="525.200" r="3.100" fill="#fff"/>
      <circle cx="537.500" cy="525.200" r="2.400" fill="#4285f4"/>
      <rect x="525.700" y="535.800" width="25.500" height="1.700" fill="#dfe9f2"/>
      <!-- help -->
      <circle cx="631" cy="525.200" r="6.400" fill="#1d8fd8" stroke="#bfe3f7" stroke-width="1"/>
      <text x="631" y="529" text-anchor="middle" font-family="Liberation Sans, sans-serif" font-weight="700" font-size="10.500" fill="#fff">?</text>
      <circle cx="636" cy="530.200" r="1.600" fill="#2aa0e6"/>
      <!-- weather -->
      <circle cx="696.700" cy="525.300" r="5.600" fill="url(#sunG)"/>
      <text x="709" y="528.600" font-family="Liberation Sans, sans-serif" font-size="8.600" fill="#fff" textLength="46.800" lengthAdjust="spacingAndGlyphs">33°C  Sunny</text>
      <!-- tray -->
      <path d="M767.300 527.300 L771 523.600 L774.700 527.300" stroke="#fff" stroke-width="1.100" fill="none"/>
      <g stroke="#e0e0e0" stroke-width=".9" fill="none"><path d="M782.300 529.500 A7.500 7.500 0 0 1 789.800 522 M784.300 529.500 A5.500 5.500 0 0 1 789.800 524 M786.300 529.500 A3.500 3.500 0 0 1 789.800 526"/><circle cx="789" cy="529" r=".9" fill="#e0e0e0"/></g>
      <path d="M796.800 529 H804.500 Q806.400 528.600 806.300 526.700 Q806 525 804.200 525 Q803.700 522.300 801 522.300 Q798.800 522.300 798 524.300 Q795.600 524.400 795.400 526.700 Q795.400 528.700 796.800 529Z" fill="#f2f2f2"/>
      <g fill="#e8e8e8"><rect x="812.600" y="519.500" width="4.600" height="7.500" rx=".8"/><rect x="811.600" y="526.600" width="6.600" height="2.400" rx=".6"/><rect x="814.300" y="529" width="1.200" height="2.200"/></g>
      <g><rect x="824.300" y="521.800" width="10.600" height="6.600" fill="none" stroke="#e8e8e8" stroke-width=".9"/><rect x="823.200" y="523.800" width="1.200" height="2.600" fill="#e8e8e8"/><rect x="829.800" y="522.800" width="4.200" height="4.600" fill="#e8e8e8"/><path d="M825.300 520.600 h3 v2 h-3z" fill="#e8e8e8"/></g>
      <g stroke="#e8e8e8" stroke-width=".9" fill="none"><path d="M839.500 523.800 H841.300 L843.600 521.600 V529.200 L841.300 527 H839.500Z"/><path d="M845.200 523.600 Q846.400 525.400 845.200 527.200 M846.900 522.300 Q848.800 525.400 846.900 528.500"/></g>
      <text x="855.700" y="528.500" font-family="Liberation Sans, sans-serif" font-size="7.600" fill="#fff" textLength="14.300" lengthAdjust="spacingAndGlyphs">ENG</text>
      <text x="896.900" y="522.700" text-anchor="middle" font-family="Liberation Sans, sans-serif" font-size="7.700" fill="#fff">10:19</text>
      <text x="896.800" y="533.900" text-anchor="middle" font-family="Liberation Sans, sans-serif" font-size="7.700" fill="#fff" textLength="37" lengthAdjust="spacingAndGlyphs">25-06-2021</text>
      <!-- notifications -->
      <path d="M926.500 519.500 H936.500 V527.800 H930 L927.500 530 V527.800 H926.500Z" fill="#f2f2f2"/>
      <path d="M928.200 521.600 H934.800 M928.200 523.600 H934.800 M928.200 525.600 H932.500" stroke="#1b1b1b" stroke-width=".7"/>
      <circle cx="936.700" cy="530.400" r="4.400" fill="#1b1b1b" stroke="#e8e8e8" stroke-width=".8"/>
      <text x="936.700" y="532.800" text-anchor="middle" font-family="Liberation Sans, sans-serif" font-weight="700" font-size="6.400" fill="#fff">22</text>
    </svg>
  </div>
</div>
</body>
</html>
